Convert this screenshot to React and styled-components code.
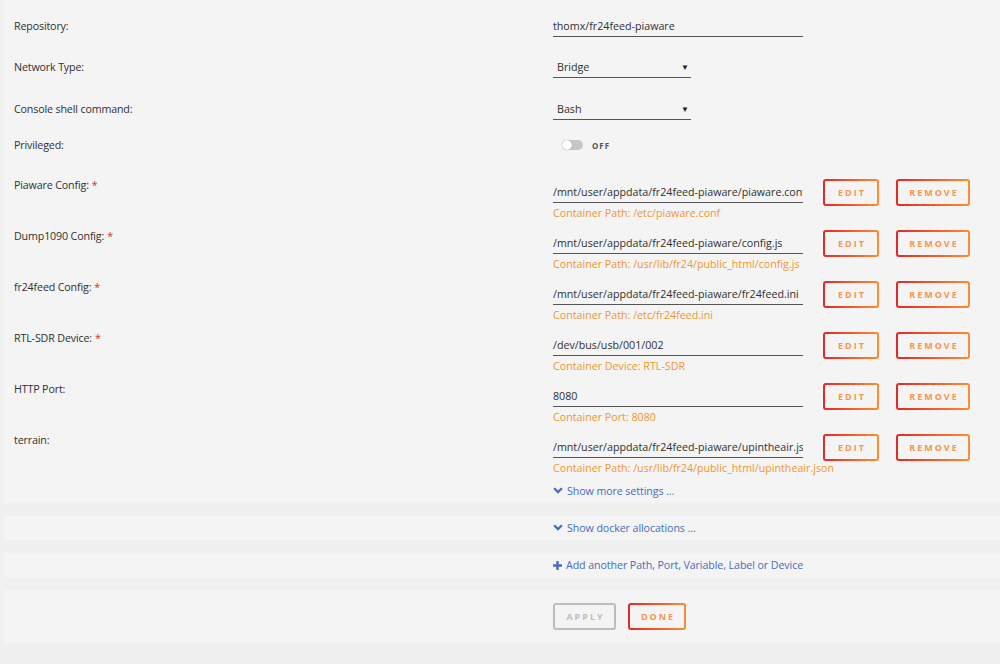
import React from 'react'
import styled, { createGlobalStyle } from 'styled-components'

const colours = {
  page: '#f0f0f0',
  panel: '#f4f4f4',
  text: '#303030',
  orange: '#f0962d',
  red: '#e22828',
  blue: '#486dba',
}

const GlobalStyle = createGlobalStyle`
  body {
    margin: 0;
    background: ${colours.page};
    font-family: 'Open Sans', 'Noto Sans', sans-serif;
    font-size: 10.7px;
    color: ${colours.text};
  }
`

const Page = styled.div`
  padding-left: 4px;
  display: flex;
  flex-direction: column;
  gap: 13px;
  min-height: 664px;
`

const Panel = styled.section`
  background: ${colours.panel};
  padding: ${({ $pad }) => $pad || '0'};
`

const Row = styled.div`
  display: flex;
  align-items: flex-start;
  height: ${({ $h }) => $h}px;
`

const Label = styled.div`
  width: 539px;
  padding-left: 10px;
  line-height: 24px;
  flex-shrink: 0;
  letter-spacing: -0.15px;
  span {
    color: ${colours.red};
    margin-left: 3px;
  }
`

const Field = styled.div`
  width: 250px;
  flex-shrink: 0;
  display: flex;
  flex-direction: column;
`

const Input = styled.div`
  width: ${({ $w }) => $w || 250}px;
  height: 23px;
  line-height: 24px;
  border-bottom: 1px solid #555;
  padding-left: ${({ $select }) => ($select ? 4 : 0)}px;
  box-sizing: border-box;
  white-space: nowrap;
  overflow: hidden;
  position: relative;
  margin-top: ${({ $mt }) => $mt || 0}px;
`

const Arrow = styled.span`
  position: absolute;
  right: 2px;
  top: 0;
  font-size: 8px;
  color: #222;
`

const Hint = styled.div`
  color: ${colours.orange};
  line-height: 16px;
  margin-top: 2px;
  white-space: nowrap;
`

const Toggle = styled.div`
  display: flex;
  align-items: center;
  gap: 9px;
  margin-left: 9px;
  height: 24px;
  font-size: 8px;
  font-weight: 700;
  letter-spacing: 1px;
  color: #555;
`

const Track = styled.div`
  width: 21px;
  height: 10px;
  border-radius: 5px;
  background: #c6c6c6;
  position: relative;
  &::after {
    content: '';
    position: absolute;
    left: 0;
    top: 0;
    width: 10px;
    height: 10px;
    border-radius: 50%;
    background: #fff;
    box-shadow: 0 0 1px rgba(0, 0, 0, 0.5);
  }
`

const Buttons = styled.div`
  display: flex;
  gap: 17px;
  margin-left: 20px;
  margin-top: 6px;
`

const Button = styled.button`
  width: ${({ $w }) => $w}px;
  height: 27px;
  border: 2px solid transparent;
  border-radius: 3px;
  background: linear-gradient(${colours.panel}, ${colours.panel}) padding-box,
    ${({ $grey }) =>
      $grey ? '#bdbdbd' : `linear-gradient(90deg, ${colours.red}, #ff8c2f)`}
      border-box;
  color: ${({ $grey }) => ($grey ? '#bcbcbc' : '#f9944c')};
  font-family: 'Open Sans', sans-serif;
  font-size: 9px;
  font-weight: 700;
  letter-spacing: 2px;
  text-transform: uppercase;
  padding: 0 0 0 2px;
  cursor: pointer;
`

const Link = styled.a`
  display: flex;
  align-items: center;
  gap: 4px;
  color: ${colours.blue};
  line-height: 24px;
  margin-left: 549px;
  letter-spacing: -0.1px;
  cursor: pointer;
  svg {
    fill: ${colours.blue};
  }
`

const Actions = styled.div`
  display: flex;
  gap: 12px;
  margin-left: 549px;
`

const Chevron = () => (
  <svg width="10" height="8" viewBox="0 0 10 8">
    <path d="M0.3 2.1 L1.9 0.5 L5 3.6 L8.1 0.5 L9.7 2.1 L5 6.8 Z" />
  </svg>
)

const Plus = () => (
  <svg width="9" height="9" viewBox="0 0 9 9">
    <path d="M3.3 0 H5.7 V3.3 H9 V5.7 H5.7 V9 H3.3 V5.7 H0 V3.3 H3.3 Z" />
  </svg>
)

const mappings = [
  ['Piaware Config:', true, '/mnt/user/appdata/fr24feed-piaware/piaware.conf', 'Container Path: /etc/piaware.conf'],
  ['Dump1090 Config:', true, '/mnt/user/appdata/fr24feed-piaware/config.js', 'Container Path: /usr/lib/fr24/public_html/config.js'],
  ['fr24feed Config:', true, '/mnt/user/appdata/fr24feed-piaware/fr24feed.ini', 'Container Path: /etc/fr24feed.ini'],
  ['RTL-SDR Device:', true, '/dev/bus/usb/001/002', 'Container Device: RTL-SDR'],
  ['HTTP Port:', false, '8080', 'Container Port: 8080'],
  ['terrain:', false, '/mnt/user/appdata/fr24feed-piaware/upintheair.json', 'Container Path: /usr/lib/fr24/public_html/upintheair.json'],
]

export default function App() {
  return (
    <>
      <GlobalStyle />
      <Page>
        <Panel $pad="14px 0 0">
          <Row $h={41}>
            <Label>Repository:</Label>
            <Input>thomx/fr24feed-piaware</Input>
          </Row>
          <Row $h={42}>
            <Label>Network Type:</Label>
            <Input $w={138} $select>
              Bridge<Arrow>▼</Arrow>
            </Input>
          </Row>
          <Row $h={36}>
            <Label>Console shell command:</Label>
            <Input $w={138} $select>
              Bash<Arrow>▼</Arrow>
            </Input>
          </Row>
          <Row $h={40}>
            <Label>Privileged:</Label>
            <Toggle>
              <Track />
              OFF
            </Toggle>
          </Row>
          {mappings.map(([label, required, value, hint]) => (
            <Row $h={51} key={label}>
              <Label>
                {label}
                {required && <span>*</span>}
              </Label>
              <Field>
                <Input $mt={7}>{value}</Input>
                <Hint>{hint}</Hint>
              </Field>
              <Buttons>
                <Button $w={56}>Edit</Button>
                <Button $w={74}>Remove</Button>
              </Buttons>
            </Row>
          ))}
          <Link>
            <Chevron />
            Show more settings ...
          </Link>
        </Panel>
        <Panel>
          <Link>
            <Chevron />
            Show docker allocations ...
          </Link>
        </Panel>
        <Panel>
          <Link>
            <Plus />
            Add another Path, Port, Variable, Label or Device
          </Link>
        </Panel>
        <Panel $pad="13px 0">
          <Actions>
            <Button $w={63} $grey>
              Apply
            </Button>
            <Button $w={58}>Done</Button>
          </Actions>
        </Panel>
      </Page>
    </>
  )
}
